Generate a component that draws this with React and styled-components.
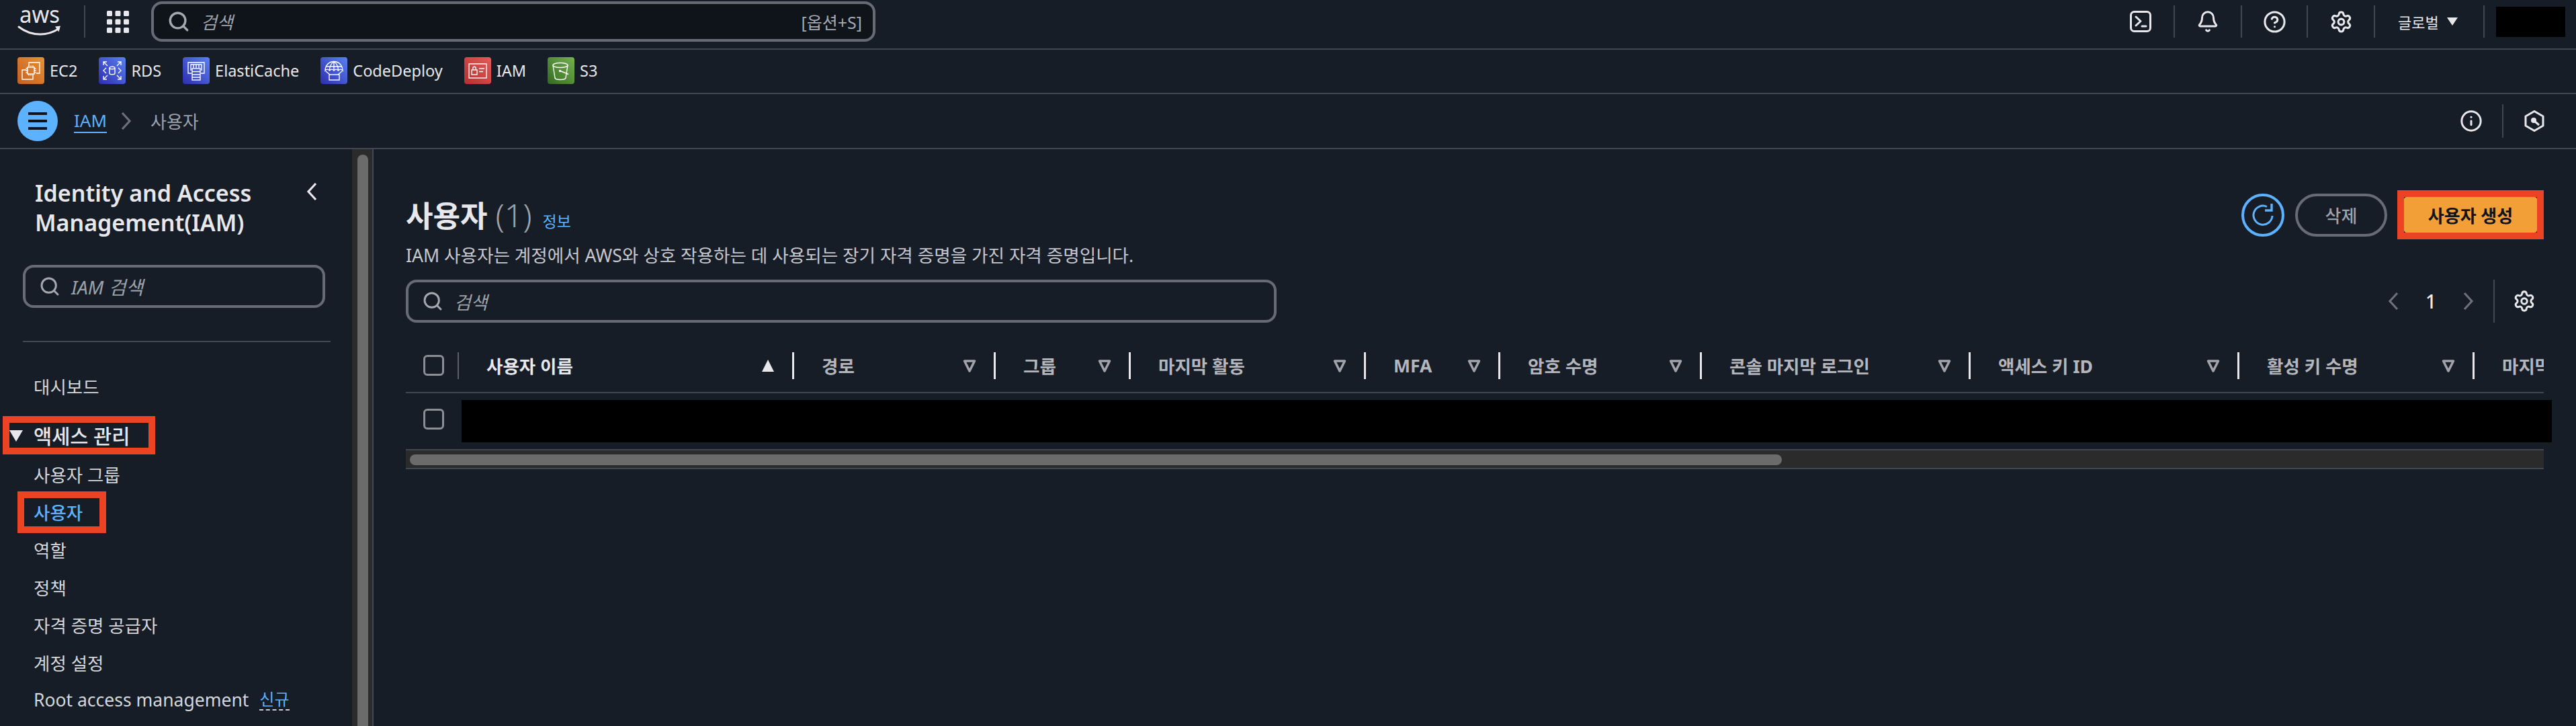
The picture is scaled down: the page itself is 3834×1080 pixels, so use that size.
import React from 'react';
import styled, { createGlobalStyle } from 'styled-components';
import { Search, Bell, CircleHelp, Settings, Info } from 'lucide-react';

const FONT = '"Noto Sans", "Noto Sans CJK KR", sans-serif';
const BG = '#161d26';
const LINE = '#414750';
const TEXT = '#e8e8ec';
const BLUE = '#5cb2ff';
const GRAY = '#666b75';

const Global = createGlobalStyle`
  html, body { margin: 0; padding: 0; background: ${BG}; }
  body { font-family: ${FONT}; color: ${TEXT}; overflow: hidden; }
  * { box-sizing: border-box; }
`;

const Page = styled.div`
  width: 3834px; height: 1080px; display: flex; flex-direction: column; overflow: hidden; background: ${BG};
`;

/* top bar */
const TopBar = styled.header`
  height: 74px; flex: none; display: flex; align-items: center; padding-left: 27px;
  border-bottom: 2px solid ${LINE};
`;
const Logo = styled.svg`width: 66px; height: 38px; flex: none; margin-top: -4px; display: block; overflow: visible;`;
const VSep = styled.span`
  flex: none; width: 2px; height: ${p => p.$h || 48}px; background: ${p => p.$c || LINE};
  margin-left: ${p => p.$ml || 0}px;
`;
const TopSep = styled(VSep)`margin-top: -8px;`;
const GridIcon = styled.svg`width: 33px; height: 33px; margin-left: 32px; margin-top: -8px; flex: none; color: ${TEXT}; display: block;`;
const GlobalSearch = styled.div`
  margin-left: 33px; width: 1078px; height: 60px; flex: none; display: flex; align-items: center;
  background: #0f141a; border: 4px solid ${GRAY}; border-radius: 16px; padding: 0 16px 0 20px; color: #a4a8b0;
  margin-top: -8px;
`;
const Placeholder = styled.span`
  font-style: italic; font-size: ${p => p.$s || 26}px; color: #9ea2aa; margin-left: ${p => p.$ml || 16}px;
`;
const Shortcut = styled.span`margin-left: auto; font-size: 25px; color: #a4a8b0;`;
const TopRight = styled.div`margin-left: auto; display: flex; align-items: center; padding-right: 16px; margin-top: -8px;`;
const IconCell = styled.div`
  flex: none; width: ${p => p.$w}px; height: 48px; display: flex; align-items: center; justify-content: center;
  border-right: 2px solid ${LINE}; color: ${TEXT};
`;
const RegionCell = styled.div`
  flex: none; width: 163px; height: 48px; display: flex; align-items: center; gap: 12px; padding-left: 34px;
  border-right: 2px solid ${LINE}; font-size: 22px; color: ${TEXT};
`;
const Caret = styled.svg`width: 16px; height: 12px; flex: none; display: block;`;
const Redact = styled.div`flex: none; width: 103px; height: 45px; margin-left: 17px; background: #000;`;

/* favourites */
const FavBar = styled.nav`
  height: 66px; flex: none; display: flex; align-items: center; gap: 32px; padding: 0 0 2px 26px;
  border-bottom: 2px solid ${LINE};
`;
const Fav = styled.div`display: flex; align-items: center; gap: 8px; font-size: 23.5px; color: ${TEXT};`;
const FavIcon = styled.svg`width: 40px; height: 40px; flex: none; display: block; border-radius: 4px;`;

/* breadcrumb */
const Crumbs = styled.div`
  height: 82px; flex: none; display: flex; align-items: center; padding: 0 0 0 26px; border-bottom: 2px solid ${LINE};
`;
const MenuButton = styled.div`
  width: 60px; height: 60px; border-radius: 50%; background: ${BLUE}; flex: none;
  display: flex; flex-direction: column; align-items: center; justify-content: center; gap: 7px;
`;
const MenuLine = styled.span`width: 28px; height: 4px; background: #0f141a;`;
const CrumbLink = styled.a`
  margin-left: 24px; font-size: 26px; line-height: 34px; color: ${BLUE}; border-bottom: 2px solid ${BLUE};
`;
const Chevron = styled.svg`
  width: 16px; height: 28px; flex: none; display: block;
  color: ${p => p.$c || TEXT};
  transform: ${p => (p.$right ? 'scaleX(-1)' : 'none')};
`;
const CrumbChevron = styled(Chevron)`margin: 0 28px 0 21px;`;
const CrumbCurrent = styled.span`font-size: 26px; color: #9ea2aa;`;
const CrumbRight = styled.div`margin-left: auto; display: flex; align-items: center; padding-right: 46px;`;
const CrumbIcon = styled.span`
  display: flex; width: 32px; justify-content: center; color: ${TEXT}; margin-left: 30px;
`;

/* body */
const Body = styled.div`flex: 1; display: flex; min-height: 0;`;
const Sidebar = styled.aside`
  width: 556px; flex: none; display: flex; border-right: 2px solid ${LINE};
`;
const SideContent = styled.div`width: 524px; flex: none; display: flex; flex-direction: column;`;
const SideScroll = styled.div`
  width: 30px; flex: none; background: #2b2b2b; padding: 8px 6px 0 8px;
`;
const SideThumb = styled.div`height: 1000px; background: #6b6b6b; border-radius: 8px 8px 0 0;`;
const SideHead = styled.div`
  display: flex; justify-content: space-between; padding: 43px 52px 0 52px;
`;
const SideTitle = styled.h2`
  margin: 0; font-size: 34px; line-height: 44px; font-weight: 600; color: ${TEXT}; white-space: nowrap;
`;
const Collapse = styled.span`display: flex; height: 40px; align-items: center;`;
const SideSearch = styled.div`
  margin: 41px 0 0 34px; width: 450px; height: 64px; flex: none; display: flex; align-items: center;
  border: 4px solid ${GRAY}; border-radius: 16px; padding-left: 20px; color: #a4a8b0;
`;
const SideDivider = styled.hr`
  margin: 49px 0 0 34px; width: 458px; height: 2px; border: 0; background: ${LINE};
`;
const NavList = styled.div`display: flex; flex-direction: column; padding-top: 38px;`;
const NavItem = styled.div`
  position: relative; height: 56px; padding: 0 0 2px 50px; display: flex; align-items: center;
  font-size: 26.5px; white-space: nowrap;
  color: ${p => (p.$active ? BLUE : '#d5d6da')}; font-weight: ${p => (p.$active ? 500 : 400)};
`;
const NavGroup = styled(NavItem)`
  margin-top: 17px; margin-bottom: 2px; color: ${TEXT}; font-weight: 500; font-size: 29.5px;
`;
const GroupCaret = styled.svg`position: absolute; left: 14px; top: 20px; width: 20px; height: 17px;`;
const NewTag = styled.span`
  margin-left: 16px; font-size: 24px; line-height: 30px; color: ${BLUE}; border-bottom: 2px dashed #c8cad0;
`;
const RedBox = styled.div`
  position: absolute; left: ${p => p.$l}px; top: ${p => p.$t}px; width: ${p => p.$w}px; height: ${p => p.$h}px;
  border: 10px solid #ec4325; pointer-events: none;
`;

/* main */
const Main = styled.main`flex: 1; min-width: 0; padding: 66px 48px 0 48px; display: flex; flex-direction: column;`;
const HeadRow = styled.div`display: flex; align-items: center; justify-content: space-between; height: 64px; flex: none;`;
const TitleWrap = styled.div`display: flex; align-items: baseline;`;
const Title = styled.h1`margin: 0; font-size: 44px; font-weight: 600; line-height: 60px; color: ${TEXT};`;
const Count = styled.span`font-weight: 300; color: #9ea2aa; margin-left: 12px; font-size: 48px;`;
const InfoLink = styled.a`font-size: 23px; color: ${BLUE}; margin-left: 16px;`;
const Actions = styled.div`display: flex; align-items: center;`;
const RoundBtn = styled.div`
  width: 64px; height: 64px; border: 4px solid ${BLUE}; border-radius: 50%; color: ${BLUE};
  display: flex; align-items: center; justify-content: center;
`;
const DeleteBtn = styled.div`
  width: 137px; height: 64px; margin-left: 16px; border: 4px solid ${GRAY}; border-radius: 32px; color: #9ea2aa;
  display: flex; align-items: center; justify-content: center; font-size: 26px; font-weight: 500;
`;
const CreateWrap = styled.div`
  margin: -5px 0 -4px 15px; border: 10px solid #ec4325; background: #0f141a; width: 218px; height: 73px; flex: none;
`;
const CreateBtn = styled.div`
  width: 100%; height: 100%; background: #f29f38; border-radius: 4px; color: #0f141a;
  display: flex; align-items: center; justify-content: center; font-size: 26px; font-weight: 600;
`;
const Desc = styled.p`margin: 8px 0 0; height: 40px; line-height: 40px; font-size: 26.6px; color: #c6c6cd; white-space: nowrap;`;
const FilterRow = styled.div`margin-top: 16px; height: 64px; flex: none; display: flex; align-items: center; justify-content: space-between;`;
const TableSearch = styled(SideSearch)`margin: 0; width: 1296px;`;
const Pager = styled.div`display: flex; align-items: center; height: 64px;`;
const PagerCell = styled.span`
  width: 56px; display: flex; justify-content: center; font-size: 28px; font-weight: 500; color: ${TEXT};
`;
const PagerSep = styled(VSep)`margin-left: 9px;`;
const GearWrap = styled.span`display: flex; color: ${TEXT}; margin: 0 12px 0 27px;`;

const HeaderRow = styled.div`
  margin-top: 24px; height: 81px; flex: none; display: flex; align-items: center; overflow: hidden;
  border-bottom: 2px solid ${LINE};
`;
const CheckCell = styled.div`
  width: 79px; flex: none; height: 40px; display: flex; align-items: center; padding-left: 26px;
  border-right: 2px solid #5a5f69;
`;
const Check = styled.span`
  display: block; flex: none; width: 31px; height: 31px; border: 3px solid #8a8e96; border-radius: 6px;
`;
const ColCell = styled.div`
  flex: none; width: ${p => p.$w}px; height: 40px; display: flex; align-items: center; justify-content: space-between;
  padding: 0 25px 0 41px; font-size: 26.5px; font-weight: 700; white-space: nowrap;
  color: ${p => (p.$sorted ? TEXT : '#b4b6bc')};
  border-right: 3px solid ${p => (p.$last ? 'transparent' : TEXT)};
`;
const SortIcon = styled.svg`width: 22px; height: 26px; flex: none; display: block;`;
const DataRow = styled.div`height: 83px; flex: none; display: flex; padding-top: 10px;`;
const RowCheck = styled.div`width: 83px; flex: none; padding: 13px 0 0 26px;`;
const RowRedact = styled.div`flex: 1; height: 63px; background: #000; margin-right: -12px;`;
const HScroll = styled.div`
  height: 30px; flex: none; background: #2b2b2b; border-top: 2px solid ${LINE}; border-bottom: 2px solid ${LINE};
  padding: 6px 0 0 6px;
`;
const HThumb = styled.div`width: ${p => p.$w}px; height: 16px; background: #6b6b6b; border-radius: 8px;`;

const grads = {
  orange: ['#c8601f', '#e89035'],
  blue: ['#2e2fae', '#5a80f2'],
  red: ['#b53030', '#e55a5a'],
  green: ['#336b20', '#75b050'],
};

const Tile = ({ id, c, children }) => (
  <FavIcon viewBox="0 0 40 40">
    <defs>
      <linearGradient id={id} x1="0" y1="1" x2="1" y2="0">
        <stop offset="0" stopColor={grads[c][0]} />
        <stop offset="1" stopColor={grads[c][1]} />
      </linearGradient>
    </defs>
    <rect width="40" height="40" fill={`url(#${id})`} />
    <g fill="none" stroke="#fff" strokeWidth="1.4">{children}</g>
  </FavIcon>
);

const Ec2 = () => (
  <Tile id="g-ec2" c="orange">
    <path d="M17 13V8h16v16h-5M13 19H7v14h16v-6" />
    <rect x="15" y="15" width="10" height="10" />
    <path d="M17 12.500v2M20 12.500v2M23 12.500v2M17 25v2.500M20 25v2.500M23 25v2.500M12.500 17h2.500M12.500 20h2.500M12.500 23h2.500M25 17h2.500M25 20h2.500M25 23h2.500" />
  </Tile>
);
const Rds = () => (
  <Tile id="g-rds" c="blue">
    <ellipse cx="20" cy="16" rx="4" ry="1.800" />
    <path d="M16 16v8c0 1 1.800 1.800 4 1.800s4-.8 4-1.800v-8" />
    <path d="M7 7l6 6M7 12V7h5M33 7l-6 6M28 7h5v5M7 33l6-6M7 28v5h5M33 33l-6-6M33 28v5h-5" />
    <path d="M11 16l-4 4 4 4M29 16l4 4-4 4" />
  </Tile>
);
const Cache = () => (
  <Tile id="g-cache" c="blue">
    <path d="M13 24H8V8h24v16h-5" />
    <path d="M12 20v-9h16v9M16 11v5M20 11v5M24 11v5" />
    <rect x="14" y="17" width="12" height="17" />
    <path d="M14 21.500h12M14 26h12M14 30h12" />
  </Tile>
);
const Deploy = () => (
  <Tile id="g-deploy" c="blue">
    <path d="M7 20C7 12 13 6.500 20 6.500S33 12 33 20c-2-2.500-4.500-2.500-6.500 0-2-2.500-4.500-2.500-6.500 0-2-2.500-4.500-2.500-6.500 0-2-2.500-4.500-2.500-6.500 0z" />
    <path d="M20 6.500V20M20 6.500c-4 3-6.500 8-6.500 13.500M20 6.500c4 3 6.500 8 6.500 13.500M8 14h24" />
    <path d="M8 21l6 5M32 21l-6 5" />
    <rect x="13" y="26" width="15" height="8" />
  </Tile>
);
const Iam = () => (
  <Tile id="g-iam" c="red">
    <rect x="7" y="10" width="26" height="21" />
    <rect x="11" y="19" width="8" height="7" />
    <path d="M12.800 19v-2.500c0-3 4.400-3 4.400 0V19M22 17h8M22 21.500h6" />
  </Tile>
);
const S3 = () => (
  <Tile id="g-s3" c="green">
    <ellipse cx="19" cy="12" rx="11" ry="3.500" />
    <path d="M8 12l3 19c.3 1.500 4 2.500 8 2.500s7.700-1 8-2.500l3-19" />
    <path d="M19 20.500l12 5" />
    <circle cx="18.500" cy="20.500" r="1" fill="#fff" />
  </Tile>
);

const SortDown = () => (
  <SortIcon viewBox="0 0 22 26">
    <path d="M3.500 6h15L11 21z" fill="none" stroke="#a0a3aa" strokeWidth="3.500" strokeLinejoin="round" />
  </SortIcon>
);
const SortUp = () => (
  <SortIcon viewBox="0 0 22 26">
    <path d="M11 4l9 18H2z" fill={TEXT} />
  </SortIcon>
);
const chevronPath = <path d="M14 2L3 14l11 12" fill="none" stroke="currentColor" strokeWidth="3.200" />;

const columns = [
  { label: '경로', w: 300 },
  { label: '그룹', w: 201 },
  { label: '마지막 활동', w: 350 },
  { label: 'MFA', w: 200 },
  { label: '암호 수명', w: 300 },
  { label: '콘솔 마지막 로그인', w: 400 },
  { label: '액세스 키 ID', w: 400 },
  { label: '활성 키 수명', w: 350 },
];

const navItems = ['역할', '정책', '자격 증명 공급자', '계정 설정'];

export default function App() {
  return (
    <Page>
      <Global />
      <TopBar>
        <Logo viewBox="0 0 66 38">
          <text x="2" y="19" fontFamily={'"Noto Sans", sans-serif'} fontSize="35" fill={TEXT} textLength="60" lengthAdjust="spacingAndGlyphs">aws</text>
          <path d="M1 25c9 7 21 11 32 11 9 0 19-3 27-8" fill="none" stroke={TEXT} strokeWidth="3" strokeLinecap="round" />
          <path d="M55 24.500l8-1-2.500 9z" fill={TEXT} />
        </Logo>
        <TopSep $ml={32} />
        <GridIcon viewBox="0 0 33 33" fill="currentColor">
          {[0, 12.5, 25].flatMap(y => [0, 12.5, 25].map(x => (
            <rect key={`${x}-${y}`} x={x} y={y} width="8" height="8" rx="1.500" />
          )))}
        </GridIcon>
        <GlobalSearch>
          <Search size={34} strokeWidth={2.4} />
          <Placeholder>검색</Placeholder>
          <Shortcut>[옵션+S]</Shortcut>
        </GlobalSearch>
        <TopRight>
          <IconCell $w={100}>
            <svg width="32" height="32" viewBox="0 0 32 32" fill="none" stroke="currentColor" strokeWidth="3">
              <rect x="1.500" y="1.500" width="29" height="29" rx="5" />
              <path d="M9 9l7 6.500L9 22M18 23h6" strokeLinecap="round" strokeLinejoin="round" />
            </svg>
          </IconCell>
          <IconCell $w={100}><Bell size={34} strokeWidth={2.1} /></IconCell>
          <IconCell $w={98}><CircleHelp size={35} strokeWidth={2.1} /></IconCell>
          <IconCell $w={100}><Settings size={35} strokeWidth={2.1} /></IconCell>
          <RegionCell>
            글로벌
            <Caret viewBox="0 0 16 12"><path d="M0 0h16L8 12z" fill={TEXT} /></Caret>
          </RegionCell>
          <Redact />
        </TopRight>
      </TopBar>

      <FavBar>
        <Fav><Ec2 />EC2</Fav>
        <Fav><Rds />RDS</Fav>
        <Fav><Cache />ElastiCache</Fav>
        <Fav><Deploy />CodeDeploy</Fav>
        <Fav><Iam />IAM</Fav>
        <Fav><S3 />S3</Fav>
      </FavBar>

      <Crumbs>
        <MenuButton><MenuLine /><MenuLine /><MenuLine /></MenuButton>
        <CrumbLink>IAM</CrumbLink>
        <CrumbChevron viewBox="0 0 16 28" $c="#6b707a" $right>{chevronPath}</CrumbChevron>
        <CrumbCurrent>사용자</CrumbCurrent>
        <CrumbRight>
          <Info size={34} strokeWidth={2.1} color={TEXT} />
          <VSep $h={50} $ml={29} />
          <CrumbIcon>
            <svg width="30" height="32" viewBox="0 0 30 32" fill="none" stroke="currentColor" strokeWidth="3">
              <path d="M15 1.500L28 9v14l-13 7.500L2 23V9z" strokeLinejoin="round" />
              <circle cx="14" cy="15" r="2.500" fill="currentColor" />
              <path d="M15 16l7 6" />
            </svg>
          </CrumbIcon>
        </CrumbRight>
      </Crumbs>

      <Body>
        <Sidebar>
          <SideContent>
            <SideHead>
              <SideTitle>Identity and Access<br />Management(IAM)</SideTitle>
              <Collapse><Chevron viewBox="0 0 16 28">{chevronPath}</Chevron></Collapse>
            </SideHead>
            <SideSearch>
              <Search size={32} strokeWidth={2.2} />
              <Placeholder $s={28} $ml={16}>IAM 검색</Placeholder>
            </SideSearch>
            <SideDivider />
            <NavList>
              <NavItem>대시보드</NavItem>
              <NavGroup>
                <GroupCaret viewBox="0 0 20 17"><path d="M0 0h20L10 17z" fill={TEXT} /></GroupCaret>
                액세스 관리
                <RedBox $l={4} $t={-1} $w={227} $h={57} />
              </NavGroup>
              <NavItem>사용자 그룹</NavItem>
              <NavItem $active>
                사용자
                <RedBox $l={26} $t={-3} $w={132} $h={62} />
              </NavItem>
              {navItems.map(n => <NavItem key={n}>{n}</NavItem>)}
              <NavItem>Root access management<NewTag>신규</NewTag></NavItem>
            </NavList>
          </SideContent>
          <SideScroll><SideThumb /></SideScroll>
        </Sidebar>

        <Main>
          <HeadRow>
            <TitleWrap>
              <Title>사용자<Count>(1)</Count></Title>
              <InfoLink>정보</InfoLink>
            </TitleWrap>
            <Actions>
              <RoundBtn>
                <svg width="34" height="34" viewBox="0 0 34 34" fill="none" stroke="currentColor" strokeWidth="3">
                  <path d="M31 18A14 14 0 1 1 23 4.500" />
                  <path d="M30 0v10h-10" strokeWidth="3.400" />
                </svg>
              </RoundBtn>
              <DeleteBtn>삭제</DeleteBtn>
              <CreateWrap><CreateBtn>사용자 생성</CreateBtn></CreateWrap>
            </Actions>
          </HeadRow>
          <Desc>IAM 사용자는 계정에서 AWS와 상호 작용하는 데 사용되는 장기 자격 증명을 가진 자격 증명입니다.</Desc>
          <FilterRow>
            <TableSearch>
              <Search size={32} strokeWidth={2.2} />
              <Placeholder $s={27} $ml={16}>검색</Placeholder>
            </TableSearch>
            <Pager>
              <PagerCell><Chevron viewBox="0 0 16 28" $c="#6b707a">{chevronPath}</Chevron></PagerCell>
              <PagerCell>1</PagerCell>
              <PagerCell><Chevron viewBox="0 0 16 28" $c="#6b707a" $right>{chevronPath}</Chevron></PagerCell>
              <PagerSep $h={64} />
              <GearWrap><Settings size={34} strokeWidth={2.1} /></GearWrap>
            </Pager>
          </FilterRow>
          <HeaderRow>
            <CheckCell><Check /></CheckCell>
            <ColCell $w={499} $sorted>사용자 이름<SortUp /></ColCell>
            {columns.map(c => (
              <ColCell key={c.label} $w={c.w}>{c.label}<SortDown /></ColCell>
            ))}
            <ColCell $w={400} $last>마지막 사용</ColCell>
          </HeaderRow>
          <DataRow>
            <RowCheck><Check /></RowCheck>
            <RowRedact />
          </DataRow>
          <HScroll><HThumb $w={2042} /></HScroll>
        </Main>
      </Body>
    </Page>
  );
}
